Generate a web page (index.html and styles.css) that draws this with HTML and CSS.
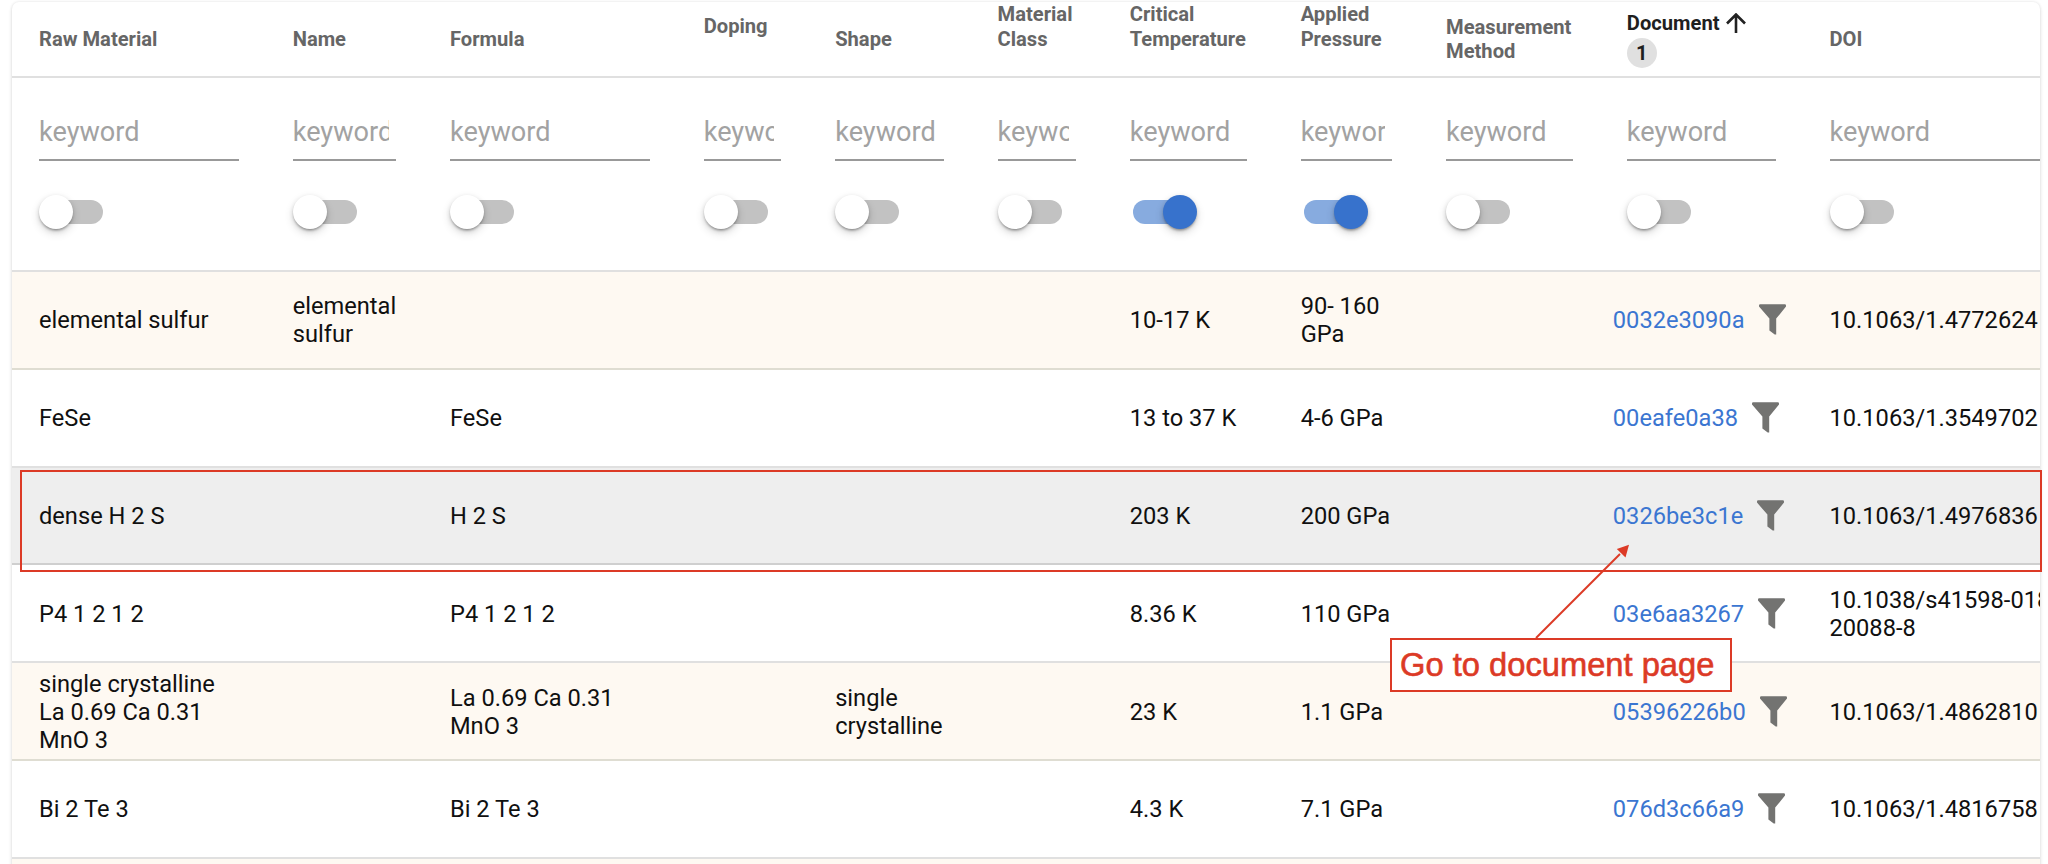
FILE: index.html
```
<!DOCTYPE html>
<html lang="en">
<head>
<meta charset="utf-8">
<title>Materials</title>
<link rel="stylesheet" href="styles.css">
</head>
<body>
<svg class="defs" aria-hidden="true"><symbol id="funnel" viewBox="0 0 27 31"><path d="M1.2.3h24.6q1.2 0 1.2 1.2v1.1L17.200 14.600V30.600h-1.500L10.400 26.400V14.600L0 2.600V1.500Q0 .3 1.200.3z"/></symbol></svg>
<main class="card">
  <div class="row head">
    <div class="cell">Raw Material</div><div class="cell">Name</div><div class="cell">Formula</div>
    <div class="cell lifted">Doping</div><div class="cell">Shape</div>
    <div class="cell lifted">Material<br>Class</div><div class="cell lifted">Critical<br>Temperature</div><div class="cell lifted">Applied<br>Pressure</div>
    <div class="cell">Measurement<br>Method</div>
    <div class="cell sorted"><div class="sort-label">Document<svg class="arrow" viewBox="0 0 20 20"><path d="M10 20V2M1 10.500 10 1.500l9 9"/></svg></div><span class="badge">1</span></div>
    <div class="cell">DOI</div>
  </div>
  <div class="row filters">
    <div class="cell"><div class="input"><span>keyword</span></div><div class="switch"></div></div>
    <div class="cell"><div class="input"><span>keyword</span></div><div class="switch"></div></div>
    <div class="cell"><div class="input"><span>keyword</span></div><div class="switch"></div></div>
    <div class="cell"><div class="input"><span>keyword</span></div><div class="switch"></div></div>
    <div class="cell"><div class="input"><span>keyword</span></div><div class="switch"></div></div>
    <div class="cell"><div class="input"><span>keyword</span></div><div class="switch"></div></div>
    <div class="cell"><div class="input"><span>keyword</span></div><div class="switch on"></div></div>
    <div class="cell"><div class="input"><span>keyword</span></div><div class="switch on"></div></div>
    <div class="cell"><div class="input"><span>keyword</span></div><div class="switch"></div></div>
    <div class="cell"><div class="input"><span>keyword</span></div><div class="switch"></div></div>
    <div class="cell"><div class="input"><span>keyword</span></div><div class="switch"></div></div>
  </div>
  <div class="row cream">
    <div class="cell">elemental sulfur</div><div class="cell">elemental<br>sulfur</div><div class="cell"></div><div class="cell"></div><div class="cell"></div><div class="cell"></div>
    <div class="cell">10-17 K</div><div class="cell">90- 160<br>GPa</div><div class="cell"></div>
    <div class="cell doc"><a>0032e3090a</a><svg class="funnel"><use href="#funnel"/></svg></div><div class="cell">10.1063/1.4772624</div>
  </div>
  <div class="row">
    <div class="cell">FeSe</div><div class="cell"></div><div class="cell">FeSe</div><div class="cell"></div><div class="cell"></div><div class="cell"></div>
    <div class="cell">13 to 37 K</div><div class="cell">4-6 GPa</div><div class="cell"></div>
    <div class="cell doc"><a>00eafe0a38</a><svg class="funnel"><use href="#funnel"/></svg></div><div class="cell">10.1063/1.3549702</div>
  </div>
  <div class="row hovered">
    <div class="cell">dense H 2 S</div><div class="cell"></div><div class="cell">H 2 S</div><div class="cell"></div><div class="cell"></div><div class="cell"></div>
    <div class="cell">203 K</div><div class="cell">200 GPa</div><div class="cell"></div>
    <div class="cell doc"><a>0326be3c1e</a><svg class="funnel"><use href="#funnel"/></svg></div><div class="cell">10.1063/1.4976836</div>
  </div>
  <div class="row">
    <div class="cell">P4 1 2 1 2</div><div class="cell"></div><div class="cell">P4 1 2 1 2</div><div class="cell"></div><div class="cell"></div><div class="cell"></div>
    <div class="cell">8.36 K</div><div class="cell">110 GPa</div><div class="cell"></div>
    <div class="cell doc"><a>03e6aa3267</a><svg class="funnel"><use href="#funnel"/></svg></div><div class="cell">10.1038/s41598-018-<br>20088-8</div>
  </div>
  <div class="row cream">
    <div class="cell">single crystalline<br>La 0.69 Ca 0.31<br>MnO 3</div><div class="cell"></div><div class="cell">La 0.69 Ca 0.31<br>MnO 3</div><div class="cell"></div><div class="cell">single<br>crystalline</div><div class="cell"></div>
    <div class="cell">23 K</div><div class="cell">1.1 GPa</div><div class="cell"></div>
    <div class="cell doc"><a>05396226b0</a><svg class="funnel"><use href="#funnel"/></svg></div><div class="cell">10.1063/1.4862810</div>
  </div>
  <div class="row">
    <div class="cell">Bi 2 Te 3</div><div class="cell"></div><div class="cell">Bi 2 Te 3</div><div class="cell"></div><div class="cell"></div><div class="cell"></div>
    <div class="cell">4.3 K</div><div class="cell">7.1 GPa</div><div class="cell"></div>
    <div class="cell doc"><a>076d3c66a9</a><svg class="funnel"><use href="#funnel"/></svg></div><div class="cell">10.1063/1.4816758</div>
  </div>
  <div class="row cream"></div>
</main>
<div class="highlight"></div>
<svg class="pointer" viewBox="0 0 110 100"><path class="shaft" d="M11 98 95 14"/><path class="tip" d="M104 4.700 91.800 9 100.500 17.500z"/></svg>
<div class="callout">Go to document page</div>
</body>
</html>
```
FILE: styles.css
```
* { box-sizing: border-box; }
body {
  margin: 0;
  height: 864px;
  padding: 2px 8px 0 12px;
  overflow: hidden;
  position: relative;
  background: #fff;
  font: 23.65px/28px Roboto, "Liberation Sans", sans-serif;
  color: #101010;
}
.defs { position: absolute; width: 0; height: 0; }
.card {
  height: 880px;
  overflow: hidden;
  border-radius: 7px;
  background: #fff;
  box-shadow: 0 2px 4px rgba(0,0,0,.1), 0 0 3px rgba(0,0,0,.1);
}
.row {
  display: grid;
  grid-template-columns: 253.7px 157.3px 253.7px 131.500px 162.400px 132.200px 170.900px 145.400px 180.800px 202.700px 300px;
  height: 97.8px;
  border-bottom: 2px solid #e0e0e0;
}
.cell {
  padding: 1px 27px 0;
  display: flex;
  flex-direction: column;
  justify-content: center;
  white-space: nowrap;
}
.cream { background: #fef9f2; border-color: #dfddd2; }
.hovered { background: #eee; border-color: #cfcfcf; }

.head { height: 76px; font-size: 20.15px; line-height: 24.5px; font-weight: 700; color: #666; }
.head .cell { padding-top: 0; padding-bottom: 1px; }
.head .lifted { padding-bottom: 26px; }
.head .sorted { color: #1f1f1f; gap: 3px; padding-bottom: 0; }
.sort-label { display: flex; align-items: center; gap: 6px; }
.arrow { width: 20px; height: 20px; fill: none; stroke: #222; stroke-width: 2.6; }
.badge {
  width: 30px;
  height: 30px;
  border-radius: 50%;
  background: #e0e0e0;
  line-height: 30px;
  text-align: center;
}

.filters { height: 194px; }
.filters .cell { justify-content: flex-start; padding-top: 34px; }
.input {
  height: 48.500px;
  padding: 4px 7px 0 0;
  border-bottom: 2px solid #999;
  font-size: 27.1px;
  line-height: 32px;
  color: #a2a2a2;
}
.input span { display: block; overflow: hidden; }
.switch {
  display: grid;
  align-items: center;
  width: 68px;
  height: 34px;
  margin-top: 34.500px;
}
.switch::before, .switch::after { content: ""; grid-area: 1 / 1; }
.switch::before { width: 58px; height: 24px; margin-left: 6px; border-radius: 12px; background: #c2c2c2; }
.switch::after {
  width: 34px;
  height: 34px;
  border-radius: 50%;
  background: #fff;
  box-shadow: 0 3px 2px -2px rgba(0,0,0,.2), 0 2px 2px rgba(0,0,0,.14), 0 2px 5px rgba(0,0,0,.12), 0 4px 10px rgba(0,0,0,.14);
}
.switch.on::before { margin-left: 3.500px; background: #87abdf; }
.switch.on::after { margin-left: 33.500px; background: #3772cc; }

.doc { flex-direction: row; align-items: center; justify-content: flex-start; gap: 14px; padding: 1px 0 0 13px; }
.doc a { color: #3b76d1; }
.funnel { width: 27px; height: 31px; fill: #737371; flex: none; margin-bottom: 1px; }

.highlight {
  position: absolute;
  left: 20px;
  top: 470px;
  width: 2022px;
  height: 102px;
  border: 2px solid #dc3a26;
}
.pointer { position: absolute; left: 1525px; top: 540px; width: 110px; height: 100px; }
.shaft { stroke: #dc3a26; stroke-width: 2; }
.tip { fill: #dc3a26; }
.callout {
  position: absolute;
  left: 1390px;
  top: 638px;
  width: 342px;
  height: 54px;
  padding-left: 8px;
  border: 2px solid #dc3a26;
  background: #fff;
  color: #dc3a26;
  font: 32.700px/50px "Liberation Sans", Arial, sans-serif;
  -webkit-text-stroke: .6px #dc3a26;
  white-space: nowrap;
}
```
